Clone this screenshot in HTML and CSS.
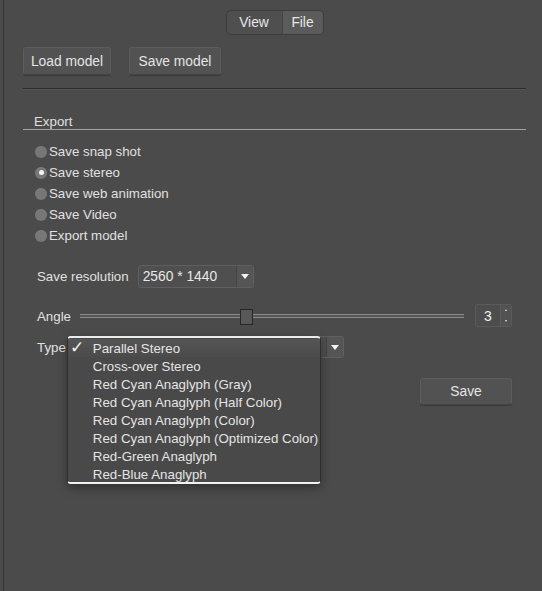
FILE: index.html
```html
<!DOCTYPE html>
<html lang="en">
<head>
<meta charset="utf-8">
<title>Export</title>
<link rel="stylesheet" href="styles.css">
</head>
<body>
<div class="window">
  <div class="tabs">
    <span class="tab">View</span>
    <span class="tab tab-active">File</span>
  </div>

  <div class="model-row">
    <button class="btn">Load model</button>
    <button class="btn">Save model</button>
  </div>

  <div class="sep"></div>

  <section class="group">
    <div class="group-title">Export</div>

    <ul class="radios">
      <li class="radio"><span class="dot"></span>Save snap shot</li>
      <li class="radio"><span class="dot dot-on"></span>Save stereo</li>
      <li class="radio"><span class="dot"></span>Save web animation</li>
      <li class="radio"><span class="dot"></span>Save Video</li>
      <li class="radio"><span class="dot"></span>Export model</li>
    </ul>

    <div class="row row-res">
      <span class="label">Save resolution</span>
      <div class="combo combo-res">
        <span class="combo-text">2560 * 1440</span>
        <span class="combo-arrow"><span class="tri"></span></span>
      </div>
    </div>

    <div class="row row-angle">
      <span class="label">Angle</span>
      <div class="slider">
        <div class="groove"></div>
        <div class="thumb"></div>
      </div>
      <div class="spin">
        <span class="spin-val">3</span>
        <span class="spin-btns"><span class="up"></span><span class="down"></span></span>
      </div>
    </div>

    <div class="row row-type">
      <span class="label">Type</span>
      <div class="combo combo-type">
        <span class="combo-text"></span>
        <span class="combo-arrow"><span class="tri"></span></span>
        <ul class="popup">
          <li class="item"><span class="check">✓</span>Parallel Stereo</li>
          <li class="item"><span class="check"></span>Cross-over Stereo</li>
          <li class="item"><span class="check"></span>Red Cyan Anaglyph (Gray)</li>
          <li class="item"><span class="check"></span>Red Cyan Anaglyph (Half Color)</li>
          <li class="item"><span class="check"></span>Red Cyan Anaglyph (Color)</li>
          <li class="item"><span class="check"></span>Red Cyan Anaglyph (Optimized Color)</li>
          <li class="item"><span class="check"></span>Red-Green Anaglyph</li>
          <li class="item"><span class="check"></span>Red-Blue Anaglyph</li>
        </ul>
      </div>
    </div>

    <div class="save-row">
      <button class="btn btn-save">Save</button>
    </div>
  </section>
</div>
</body>
</html>
```

FILE: styles.css
```css
* { box-sizing: border-box; }

html, body {
  margin: 0;
  height: 100%;
  background: #4b4b4b;
}

body {
  font-family: "Liberation Sans", Arial, sans-serif;
  font-size: 13.3px;
  color: #e0e0e0;
}

.window {
  margin-left: 3px;
  min-height: 100%;
  border-left: 1px solid #353535;
  padding: 10px 16px 0 19px;
}

/* segmented View / File switch */
.tabs {
  display: flex;
  justify-content: center;
  height: 25px;
}
.tab {
  display: flex;
  align-items: center;
  justify-content: center;
  height: 25px;
  background: #4f4f4f;
  border: 1px solid #3c3c3c;
  color: #e6e6e6;
  font-size: 13.8px;
}
.tab:first-child {
  width: 56px;
  border-radius: 5px 0 0 5px;
  border-right: none;
}
.tab-active {
  width: 42px;
  background: #5b5b5b;
  border-left: 1px solid #454545;
  border-radius: 0 5px 5px 0;
}

/* push buttons */
.btn {
  font: inherit;
  font-size: 13.8px;
  color: #e4e4e4;
  background: #525252;
  border: 1px solid #5c5c5c;
  border-bottom-color: #444;
  border-radius: 3px;
  box-shadow: 0 1px 1px rgba(0,0,0,0.25);
  padding: 0;
  height: 28px;
}

.model-row {
  display: flex;
  gap: 18px;
  margin-top: 12px;
}
.model-row .btn:first-child { width: 88px; }
.model-row .btn:last-child { width: 92px; }

.sep {
  margin-top: 13px;
  height: 2px;
  border-top: 1px solid #2c2c2c;
  border-bottom: 1px solid #555;
}

/* Export group */
.group-title {
  margin-top: 23px;
  height: 17px;
  line-height: 17px;
  padding-left: 11px;
  border-bottom: 1px solid #a2a2a2;
}

.radios {
  list-style: none;
  margin: 11px 0 0;
  padding: 0 0 0 12px;
}
.radio {
  display: flex;
  align-items: center;
  gap: 2px;
  height: 21px;
}
.dot {
  width: 12px;
  height: 12px;
  border-radius: 50%;
  background: #777;
  box-shadow: inset 0 1px 1px rgba(255,255,255,0.08);
  display: flex;
  align-items: center;
  justify-content: center;
}
.dot-on::after {
  content: "";
  width: 5px;
  height: 5px;
  border-radius: 50%;
  background: #f4f4f4;
}

.row {
  display: flex;
  align-items: center;
  padding: 0 14px;
}

.row-res {
  margin-top: 19px;
  height: 23px;
  gap: 9px;
}

.combo {
  position: relative;
  display: flex;
  align-items: center;
  height: 23px;
  background: #4f4f4f;
  border: 1px solid #5f5f5f;
  border-radius: 3px;
}
.combo-text {
  flex: 1;
  padding-left: 4px;
  color: #e8e8e8;
  font-size: 13.8px;
}
.combo-arrow {
  width: 17px;
  height: 100%;
  display: flex;
  align-items: center;
  justify-content: center;
  background: #555;
  border-left: 1px solid #444;
  border-radius: 0 3px 3px 0;
}
.tri {
  width: 0;
  height: 0;
  border-left: 4px solid transparent;
  border-right: 4px solid transparent;
  border-top: 5px solid #f2f2f2;
}
.combo-res { width: 116px; }

/* Angle slider with spin box */
.row-angle {
  margin-top: 16px;
  height: 23px;
}
.row-angle .label { width: 43px; padding-top: 2px; }
.slider {
  position: relative;
  flex: 1;
  height: 23px;
  display: flex;
  align-items: center;
}
.groove {
  width: 100%;
  height: 4px;
  margin-top: 1px;
  border-top: 1px solid #8a8a8a;
  border-bottom: 1px solid #8a8a8a;
  background: #555;
}
.thumb {
  position: absolute;
  left: 160px;
  top: 5px;
  width: 13px;
  height: 16px;
  background: #585858;
  border: 1px solid #262626;
}
.spin {
  margin-left: 11px;
  width: 37px;
  height: 23px;
  display: flex;
  border: 1px solid #5a5a5a;
  border-radius: 2px;
  background: #4d4d4d;
}
.spin-val {
  flex: 1;
  display: flex;
  align-items: center;
  padding-left: 8px;
  font-size: 14px;
  color: #f0f0f0;
}
.spin-btns {
  width: 11px;
  display: flex;
  flex-direction: column;
  align-items: center;
  justify-content: space-around;
  border-left: 1px solid #5a5a5a;
  background: #525252;
}
.up, .down {
  width: 0;
  height: 0;
  border-left: 1.5px solid transparent;
  border-right: 1.5px solid transparent;
}
.up { border-bottom: 2px solid #e8e8e8; }
.down { border-top: 2px solid #e8e8e8; }

/* Type combo and its open list */
.row-type {
  margin-top: 9px;
  height: 22px;
  gap: 2px;
}
.combo-type {
  width: 276px;
  height: 22px;
}
.popup {
  position: absolute;
  left: -2px;
  top: -1px;
  width: 254px;
  height: 148px;
  margin: 0;
  padding: 1px 0 0;
  list-style: none;
  background: #494949;
  border: 1px solid #2f2f2f;
  border-top: 2px solid #ececec;
  border-bottom: 2px solid #f2f2f2;
  border-radius: 4px;
  box-shadow: 0 4px 10px rgba(0,0,0,0.35);
}
.item {
  display: flex;
  align-items: center;
  height: 18px;
  color: #e4e4e4;
  white-space: nowrap;
}
.item:first-child {
  background: linear-gradient(#555, #4b4b4b);
}
.check {
  width: 25px;
  padding-left: 2px;
  font-size: 17px;
  line-height: 18px;
  color: #f2f2f2;
}

.save-row {
  display: flex;
  justify-content: flex-end;
  padding-right: 14px;
  margin-top: 20px;
}
.btn-save {
  width: 92px;
  height: 27px;
}
```
